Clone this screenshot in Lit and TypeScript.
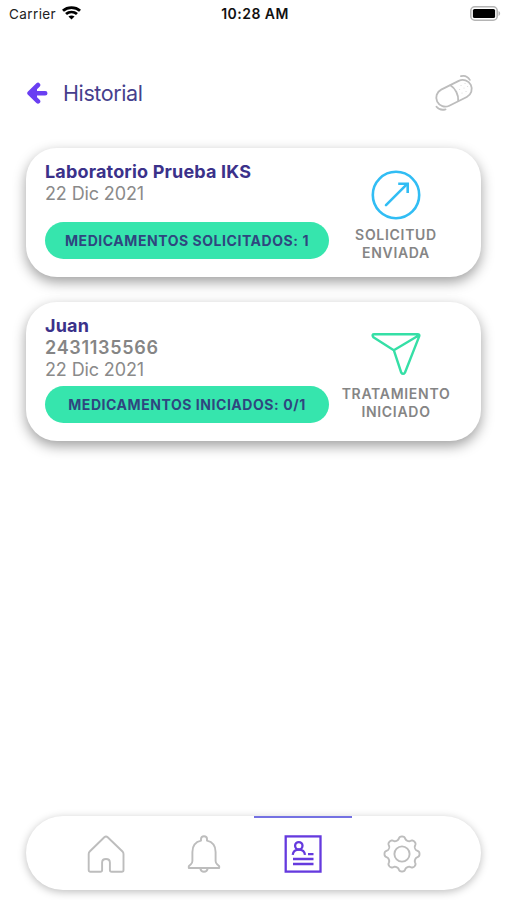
import { LitElement, html, css, svg } from "lit";
import { customElement } from "lit/decorators.js";

const gearPath = (cx: number, cy: number, base: number, amp: number): string => {
  const pts: string[] = [];
  for (let i = 0; i < 240; i++) {
    const a = (i / 240) * Math.PI * 2;
    const w = Math.tanh(1.6 * Math.cos(8 * a)) / Math.tanh(1.6);
    const r = base + amp * w;
    pts.push(`${(cx + r * Math.cos(a)).toFixed(2)} ${(cy + r * Math.sin(a)).toFixed(2)}`);
  }
  return `M${pts.join("L")}Z`;
};

const wifi = svg`<svg class="wifi" width="19" height="14" viewBox="0 0 18 14" preserveAspectRatio="none" fill="none" stroke="#000" stroke-width="2.7">
  <path d="M.9 4.7C5.5.5 12.5.5 17.1 4.7"/>
  <path d="M3.8 8C6.8 5.3 11.2 5.3 14.2 8"/>
  <path d="M6.1 10.6C7.8 9.1 10.2 9.1 11.9 10.6L9 13.5Z" fill="#000" stroke="none"/></svg>`;

const battery = svg`<svg class="battery" width="31" height="15" viewBox="0 0 31 15">
  <rect x=".8" y=".8" width="26.4" height="13.4" rx="4" fill="#fff" stroke="#b4b4b4" stroke-width="1.6"/>
  <rect x="2.9" y="2.9" width="22.2" height="9.2" rx="1.6" fill="#000"/>
  <path d="M28.5 5.1c2.2.7 2.2 4.1 0 4.8Z" fill="#b4b4b4"/></svg>`;

const back = svg`<svg class="back" width="22" height="22" viewBox="0 0 22 22" fill="none" stroke="#6a3ff2" stroke-width="4.6" stroke-linecap="round" stroke-linejoin="round">
  <path d="M12 3 3.600 11.200 12 19.400M4.600 11.200H19.200"/><path d="M4.400 11.200 11 5.500v11.400Z" fill="#6a3ff2" stroke="none"/></svg>`;

const pill = svg`<svg class="pill" width="40" height="38" viewBox="0 0 40 38" fill="none" stroke="#bdbdbd" stroke-width="1.800" stroke-linecap="round">
  <g transform="rotate(-26.600 20 19.300)"><rect x="1.200" y="10.300" width="37.600" height="18" rx="9"/><path d="M20.300 10.500C23.500 15.500 23.500 22.800 20.300 28.100"/></g>
  <path d="M27 2.200c3.200-.9 6.800.4 8.800 3.700M2.500 32.700c2.200 2.700 5.700 3.600 9 2.600"/>
  <path d="M27 11.500h.1M31 9.500h.1M25.500 15.500h.1M30 14h.1M33.500 12.500h.1M28 19h.1M32 17.500h.1" stroke="#dedede" stroke-width="1.200"/></svg>`;

const sent = svg`<svg width="50" height="50" viewBox="0 0 50 50" fill="none" stroke="#31bdf4" stroke-width="2.600">
  <circle cx="25" cy="25" r="23.200"/><path d="M15 35.200 36 14.200" stroke-linecap="round"/><path d="M27.200 13.700h9.500V23"/></svg>`;

const plane = svg`<svg width="50" height="44" viewBox="0 0 50 44" fill="none" stroke="#35dfa6" stroke-width="2.400" stroke-linejoin="round">
  <path d="M2.900 2.200H46.500Q49 2.200 48.200 4.400L34 40.500Q32 43.200 30.200 40.500L22.800 18.200 2.400 5.200Q.5 2.500 2.900 2.200ZM22.800 18.200 48 3.200"/></svg>`;

const home = svg`<svg class="home" width="38" height="38" viewBox="0 0 38 38" fill="none" stroke="#bdbdbd" stroke-width="1.900" stroke-linejoin="round">
  <path d="M17.300 2.200Q19 .7 20.700 2.200L35.500 16.500Q36.500 17.500 36.500 19V35Q36.500 36.800 34.700 36.800H24.700Q22.900 36.800 22.900 35V27.500Q22.900 24 19 24T15.100 27.500V35Q15.100 36.800 13.300 36.800H3.500Q1.700 36.800 1.700 35V19Q1.700 17.500 2.700 16.500Z"/></svg>`;

const bell = svg`<svg width="38" height="38" viewBox="0 0 38 38" fill="none" stroke="#bdbdbd" stroke-width="1.900" stroke-linejoin="round">
  <path d="M16 5.700V4Q16 1.300 19 1.300T22 4V5.700C27.500 7 30.600 11.500 30.600 17V26Q30.600 28 32.300 29.400L34.200 31.200V33H3.800V31.200L5.700 29.400Q7.400 28 7.400 26V17C7.400 11.500 10.500 7 16 5.700ZM15.300 33.500Q16 36.800 19 36.800T22.700 33.500"/></svg>`;

const record = svg`<svg width="38" height="38" viewBox="0 0 38 38" fill="none" stroke="#653ade" stroke-width="2.300">
  <rect x="1.700" y="1.400" width="34.800" height="35.200"/>
  <circle cx="14.800" cy="10.800" r="3.700"/><path d="M8.700 19.800C9.700 13 20 13 21 19.800M24 19.200h5.500M9 24h20.500M9 29h20.500"/></svg>`;

const gear = svg`<svg width="38" height="38" viewBox="0 0 38 38" fill="none" stroke="#bdbdbd" stroke-width="1.900" stroke-linejoin="round">
  <path d=${gearPath(19, 19, 15.9, 1.6)}/><circle cx="19" cy="19" r="7.600"/></svg>`;

@customElement("app-root")
export class AppRoot extends LitElement {
  static styles = css`
    :host { display: block; height: 900px; background: #fff; font-family: Inter, "Liberation Sans", sans-serif; overflow: hidden; }
    * { box-sizing: border-box; }
    svg { display: block; flex: none; }
    .screen { height: 900px; display: flex; flex-direction: column; }
    .status { height: 28px; display: grid; grid-template-columns: 1fr auto 1fr; align-items: center; padding: 0 6px 0 9px; font-size: 13.5px; color: #222; }
    .carrier { display: flex; align-items: center; gap: 6px; letter-spacing: 0.4px; }
    .time { font-weight: 600; color: #111; font-size: 14px; letter-spacing: 0.45px; margin-bottom: 2px; }
    .battery { justify-self: end; margin-bottom: 2px; }
    .wifi { margin-bottom: 2px; }
    .header { display: flex; align-items: center; height: 40px; margin: 45px 33px 0 26px; }
    .title { flex: 1; margin-left: 15px; font-size: 21.5px; line-height: 28px; font-weight: 400; color: #463f8d; letter-spacing: -0.4px; }
    .list { display: flex; flex-direction: column; gap: 25px; margin: 35px 26px 0; flex: 1; }
    .card { display: flex; height: 129px; padding: 12px 18px 18px 19px; border-radius: 31px; background: #fff; box-shadow: 0 5px 13px rgba(0, 0, 0, 0.38); }
    .card.tall { height: 139px; }
    .info { width: 284px; padding-top: 1px; display: flex; flex-direction: column; }
    .line { font-size: 18px; line-height: 22px; color: #8a8a8a; letter-spacing: -0.12px; white-space: nowrap; }
    .name { font-weight: 650; color: #3b318a; letter-spacing: 0.17px; }
    .phone { font-weight: 600; color: #858585; letter-spacing: 0.7px; }
    .tag { margin-top: auto; height: 37px; border-radius: 19px; background: #36e5ad; color: #2f467f; font-size: 14px; line-height: 38px; font-weight: 650; text-align: center; letter-spacing: 0.55px; white-space: nowrap; }
    .state { flex: 1; margin: 0 -12px; display: flex; flex-direction: column; align-items: center; padding-top: 10px; }
    .tall .state { padding-top: 18px; }
    .label { margin-top: 6px; font-size: 14px; line-height: 17.5px; font-weight: 600; color: #858585; text-align: center; letter-spacing: 0.7px; }
    .tall .label { margin-top: 9px; }
    .nav { height: 74px; margin: 0 26px 10px; padding: 0 30px; border-radius: 37px; background: #fff; display: flex; box-shadow: 0 2px 8px rgba(0, 0, 0, 0.26); }
    .tab { flex: 1; display: flex; align-items: center; justify-content: center; border-top: 2px solid transparent; }
    .tab.active { border-top-color: #7471e2; }
    .home { margin-left: 2px; }
  `;

  render() {
    return html`
      <div class="screen">
        <div class="status">
          <div class="carrier"><span class="carrier-name">Carrier</span>${wifi}</div>
          <div class="time">10:28 AM</div>
          ${battery}
        </div>
        <header class="header">${back}<div class="title">Historial</div>${pill}</header>
        <main class="list">
          <section class="card">
            <div class="info">
              <div class="line name">Laboratorio Prueba IKS</div>
              <div class="line">22 Dic 2021</div>
              <div class="tag">MEDICAMENTOS SOLICITADOS: 1</div>
            </div>
            <div class="state">${sent}<div class="label">SOLICITUD<br />ENVIADA</div></div>
          </section>
          <section class="card tall">
            <div class="info">
              <div class="line name">Juan</div>
              <div class="line phone">2431135566</div>
              <div class="line">22 Dic 2021</div>
              <div class="tag">MEDICAMENTOS INICIADOS: 0/1</div>
            </div>
            <div class="state">${plane}<div class="label">TRATAMIENTO<br />INICIADO</div></div>
          </section>
        </main>
        <nav class="nav">
          <div class="tab">${home}</div>
          <div class="tab">${bell}</div>
          <div class="tab active">${record}</div>
          <div class="tab">${gear}</div>
        </nav>
      </div>
    `;
  }
}
